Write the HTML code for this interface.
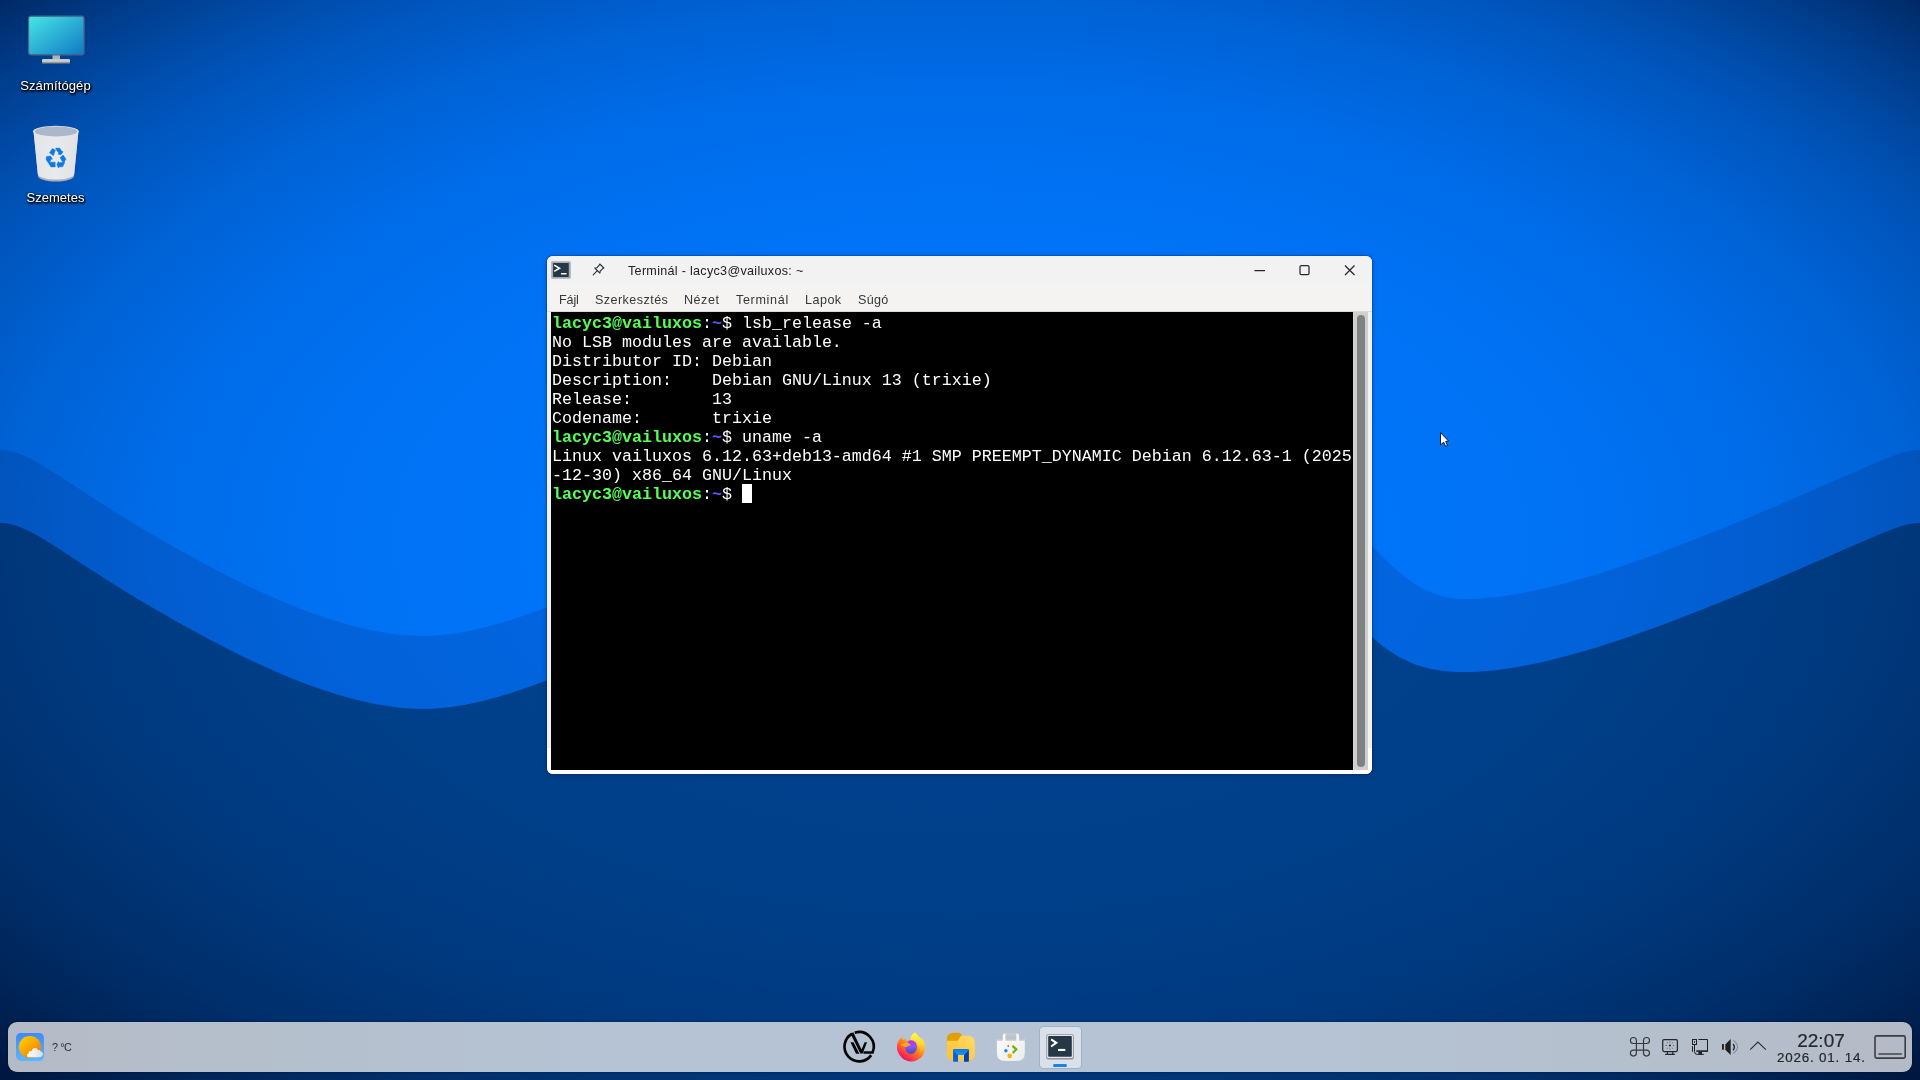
<!DOCTYPE html>
<html lang="hu">
<head>
<meta charset="utf-8">
<title>Desktop</title>
<style>
*{box-sizing:border-box;margin:0;padding:0}
html,body{width:1920px;height:1080px;overflow:hidden;background:#003a86;font-family:"Liberation Sans",sans-serif;}
#bg{position:absolute;left:0;top:0;width:1920px;height:1080px;display:block}
.abs{position:absolute}
.dlabel{position:absolute;color:#fff;font-size:13px;line-height:16px;text-align:center;white-space:nowrap;
 text-shadow:1px 1px 2px rgba(0,0,0,.95),0 1px 3px rgba(0,0,0,.85),0 0 2px rgba(0,0,0,.8),1px 2px 2px rgba(0,0,0,.6);}
/* window */
#win{position:absolute;left:547px;top:256px;width:825px;height:518px;background:#f2f2f2;border-radius:6px;
 box-shadow:0 0 0 1px rgba(0,30,90,.22),0 1px 5px rgba(0,20,70,.4);overflow:hidden}
#titlebar{position:absolute;left:0;top:0;width:825px;height:29px;background:#f2f2f2}
#menubar{position:absolute;left:0;top:29px;width:825px;height:27px;background:#f4f3f2;border-bottom:1px solid #dcdad8}
#title{position:absolute;left:81px;top:7px;font-size:12.6px;line-height:16px;color:#222;white-space:nowrap;letter-spacing:.29px}
.mi{position:absolute;top:36px;font-size:12.6px;line-height:16px;color:#33383c;white-space:nowrap}
#term{position:absolute;left:4px;top:56px;width:802px;height:458px;background:#000;color:#fff;
 font-family:"Liberation Mono",monospace;font-size:16.667px;line-height:19px;white-space:pre;padding:2px 0 0 1px}
#term b{color:#55ff55;font-weight:bold}
#term i{color:#5555ff;font-style:normal;font-weight:bold}
#cursor{display:inline-block;width:10px;height:19px;background:#fff;vertical-align:top;margin-top:-1px}
#sbtrack{position:absolute;left:806px;top:56px;width:15px;height:458px;background:#cfcfcf;border-left:1px solid #d9d6d2}
#sbthumb{position:absolute;left:810px;top:59px;width:8px;height:452px;background:#7e8283;border-radius:4px}
/* panel */
#panel{position:absolute;left:8px;top:1022px;width:1904px;height:50px;background:linear-gradient(90deg,#b4bac6 0%,#b5bfcb 10%,#b5c3d4 33%,#b5c3d4 67%,#b5bfcb 90%,#b4bac6 100%);border-radius:9px;box-shadow:0 0 3px rgba(0,0,20,.45)}
#temp{position:absolute;left:52px;top:1040px;font-size:10.8px;line-height:14px;color:#2a2e32;white-space:nowrap;letter-spacing:-.4px}
#clock{position:absolute;left:1771px;top:1029.6px;-webkit-text-stroke:.2px #24282c;width:100px;text-align:center;font-size:19px;line-height:22px;color:#24282c;white-space:nowrap;letter-spacing:0}
#date{position:absolute;left:1771px;top:1049.5px;-webkit-text-stroke:.2px #24282c;width:100px;text-align:center;font-size:13.4px;line-height:16px;color:#24282c;white-space:nowrap;letter-spacing:.8px;text-indent:.8px}
#active{position:absolute;left:1040px;top:1027px;width:40.5px;height:40.5px;background:#dbe1eb;border-radius:3.5px;box-shadow:0 0 0 .8px rgba(120,135,160,.4)}
#ind{position:absolute;left:1053px;top:1064px;width:14px;height:3px;background:#1683e6;border-radius:1.5px}
#title,.mi,#term,.dlabel,#temp,#clock,#date{will-change:transform}
</style>
</head>
<body>
<svg id="bg" width="1920" height="1080" viewBox="0 0 1920 1080">
 <defs>
  <radialGradient id="vg" gradientUnits="userSpaceOnUse" cx="0" cy="0" r="1" gradientTransform="translate(960 540) scale(1357.6 763.7)">
   <stop offset="0" stop-color="#000014" stop-opacity="0.0000"/>
   <stop offset="0.3" stop-color="#000014" stop-opacity="0.0053"/>
   <stop offset="0.4" stop-color="#000014" stop-opacity="0.0166"/>
   <stop offset="0.5" stop-color="#000014" stop-opacity="0.0406"/>
   <stop offset="0.6" stop-color="#000014" stop-opacity="0.0842"/>
   <stop offset="0.7" stop-color="#000014" stop-opacity="0.1561"/>
   <stop offset="0.8" stop-color="#000014" stop-opacity="0.2662"/>
   <stop offset="0.85" stop-color="#000014" stop-opacity="0.3393"/>
   <stop offset="0.9" stop-color="#000014" stop-opacity="0.4265"/>
   <stop offset="0.95" stop-color="#000014" stop-opacity="0.5294"/>
   <stop offset="1.0" stop-color="#000014" stop-opacity="0.6500"/>
  </radialGradient>
 </defs>
 <rect width="1920" height="1080" fill="#0075fa"/>
 <path id="w1" fill="#0265e0" d="M0,450 C30,450 60,480 148,532 C260,598 350,636 424,636 C520,636 640,560 800,500 C1000,430 1250,420 1372,546 C1400,575 1425,599 1464,599 C1560,599 1700,540 1864,468 C1890,457 1905,450 1920,450 L1920,1080 L0,1080 Z"/>
 <path id="w2" fill="#00418d" d="M0,523 C30,523 60,553 148,605 C260,671 350,709 424,709 C520,709 640,633 800,573 C1000,503 1250,493 1372,637 C1400,662 1425,672 1464,672 C1560,672 1700,613 1864,541 C1890,530 1905,523 1920,523 L1920,1080 L0,1080 Z"/>
 <rect width="1920" height="1080" fill="url(#vg)"/>
</svg>

<!-- desktop icons -->
<svg class="abs" style="left:26px;top:13px" width="60" height="54" viewBox="0 0 60 54">
 <defs><linearGradient id="mon" x1="0" y1="0" x2="1" y2="1"><stop offset="0" stop-color="#48e6e6"/><stop offset="1" stop-color="#0f78c4"/></linearGradient></defs>
 <rect x="26.5" y="41" width="7.5" height="6" fill="#aab3bd"/>
 <rect x="16" y="46" width="28" height="4" rx="1" fill="#c4cbd2"/>
 <rect x="16" y="49.5" width="28" height="1.5" fill="#5a6470"/>
 <rect x="2.5" y="3.2" width="55.5" height="38.6" rx="2.5" fill="url(#mon)" stroke="#4a6682" stroke-width="1.3"/>
</svg>
<div class="dlabel" style="left:5px;top:78px;width:101px;letter-spacing:.13px">Számítógép</div>

<svg class="abs" style="left:30px;top:123px" width="52" height="62" viewBox="0 0 52 62">
 <defs><linearGradient id="tr" x1="0" y1="0" x2="1" y2="0"><stop offset="0" stop-color="#e2e4e7"/><stop offset=".5" stop-color="#e9eaec"/><stop offset="1" stop-color="#e0e2e5"/></linearGradient></defs>
 <path d="M3.5,8 L8,53 C8,56.5 17,58.5 26,58.5 C35,58.5 44,56.5 44,53 L48.5,8 Z" fill="#a9aeb4"/>
 <path d="M3.5,8 L7.8,51 C7.8,54.5 17,56.5 26,56.5 C35,56.5 44.2,54.5 44.2,51 L48.5,8 Z" fill="url(#tr)"/>
 <ellipse cx="25.9" cy="8.3" rx="22.8" ry="5.5" fill="#e4e5e7"/>
 <ellipse cx="25.9" cy="8.5" rx="21.2" ry="4.9" fill="#abb8cb"/>
 <path fill="#0c7ade" stroke="#0c7ade" stroke-width=".5" stroke-linejoin="round" d="M22.4,25.6 L25.4,27.1 L23.4,32.8 L19.5,29.7 Z M25.6,25.1 L29.9,25.2 L31.5,28.1 L33.1,28.7 L31.0,31.7 L28.1,31.2 L28.9,30.0 L26.7,27.6 Z M33.1,32.1 L36.0,36.1 L34.1,38.9 L32.2,38.6 L30.1,34.6 Z M34.8,39.1 L32.7,43.8 L29.3,43.8 L28.4,45.0 L26.9,41.5 L28.4,38.4 L29.3,39.8 Z M19.5,39.2 L25.2,39.2 L25.2,43.9 L20.9,43.9 L19.1,41.0 Z M16.0,36.1 L16.6,33.4 L20.6,33.1 L22.4,36.1 L20.9,36.4 L19.1,40.7 L17.3,38.6 Z"/>
</svg>
<div class="dlabel" style="left:5px;top:190px;width:101px">Szemetes</div>

<!-- terminal window -->
<div id="win">
 <div id="titlebar"></div>
 <div id="menubar"></div>
 <svg class="abs" style="left:3px;top:4px" width="22" height="20" viewBox="0 0 22 20">
  <rect x="1.2" y="1.2" width="19.6" height="17.6" rx="1.2" fill="#a6aeb7"/>
  <rect x="3.1" y="3" width="15.7" height="13.9" rx=".4" fill="#263845"/>
  <path d="M4.2,5.1 L9.5,8.25 L4.2,11.4" fill="none" stroke="#fff" stroke-width="1.6"/>
  <rect x="11" y="13" width="5.6" height="1.5" fill="#fff"/>
 </svg>
 <svg class="abs" style="left:44px;top:6px" width="15" height="15" viewBox="-.6 -.6 15 15">
  <g fill="none" stroke="#2c3034" stroke-width="1.1" stroke-linejoin="round" stroke-linecap="round">
   <path d="M8.2,1.4 L12.2,5.4 L10.9,6.2 L8.6,8.6 L8.3,10.6 L3.2,5.4 L5.2,5.2 L7.5,2.8 Z"/>
   <path d="M5.7,8.1 L1.6,12.2"/>
  </g>
 </svg>
 <div id="title">Terminál - lacyc3@vailuxos: ~</div>
 <svg class="abs" style="left:700px;top:0" width="125" height="29" viewBox="0 0 125 29">
  <g fill="none" stroke="#25292d" stroke-width="1.25">
   <path d="M7.5,14.5 H18"/>
   <rect x="53" y="9.5" width="9" height="9" rx="1.3"/>
   <path d="M98,9.5 L107.5,19 M107.5,9.5 L98,19"/>
  </g>
 </svg>
 <div class="mi" style="left:12px;letter-spacing:-0.15px">Fájl</div>
 <div class="mi" style="left:48px;letter-spacing:0.43px">Szerkesztés</div>
 <div class="mi" style="left:137px;letter-spacing:0.5px">Nézet</div>
 <div class="mi" style="left:189px;letter-spacing:0.66px">Terminál</div>
 <div class="mi" style="left:258px;letter-spacing:0.46px">Lapok</div>
 <div class="mi" style="left:311px;letter-spacing:0.3px">Súgó</div>
 <div id="term"><b>lacyc3@vailuxos</b>:<i>~</i>$ lsb_release -a
No LSB modules are available.
Distributor ID: Debian
Description:    Debian GNU/Linux 13 (trixie)
Release:        13
Codename:       trixie
<b>lacyc3@vailuxos</b>:<i>~</i>$ uname -a
Linux vailuxos 6.12.63+deb13-amd64 #1 SMP PREEMPT_DYNAMIC Debian 6.12.63-1 (2025
-12-30) x86_64 GNU/Linux
<b>lacyc3@vailuxos</b>:<i>~</i>$ <span id="cursor"></span></div>
 <div class="abs" style="left:0;top:492px;width:825px;height:26px;background:#fff"></div>
 <div class="abs" style="left:4px;top:492px;width:802px;height:22px;background:#000"></div>
 <div id="sbtrack"></div>
 <div id="sbthumb"></div>
</div>

<!-- mouse cursor -->
<svg class="abs" style="left:1439px;top:431px" width="14" height="18" viewBox="0 0 14 18">
 <path d="M1.5,1.6 L1.5,13.8 L4.7,11.2 L6.6,15.3 L8.5,14.5 L6.7,10.5 L9.5,10 Z" fill="#fff" stroke="#10141c" stroke-width=".95" stroke-linejoin="round"/>
</svg>

<!-- panel -->
<div id="panel"></div>
<div id="temp">? °C</div>
<div id="active"></div>
<div id="ind"></div>
<div id="clock">22:07</div>
<div id="date">2026. 01. 14.</div>
<!-- weather -->
<svg class="abs" style="left:16px;top:1033px" width="28" height="28" viewBox="0 0 28 28">
 <defs>
  <linearGradient id="wbg" x1="0" y1="0" x2="0" y2="1"><stop offset="0" stop-color="#3f88ff"/><stop offset="1" stop-color="#5cb6ff"/></linearGradient>
  <linearGradient id="wsun" x1=".15" y1=".1" x2=".85" y2=".9"><stop offset="0" stop-color="#ffcc00"/><stop offset=".55" stop-color="#f8a000"/><stop offset="1" stop-color="#ee7400"/></linearGradient>
  <linearGradient id="wcl" x1="0" y1="0" x2="1" y2="0"><stop offset="0" stop-color="#ffffff"/><stop offset="1" stop-color="#dcdcdc"/></linearGradient>
 </defs>
 <rect x="0" y="0" width="28" height="28" rx="4.8" fill="url(#wbg)"/>
 <circle cx="13.9" cy="14" r="11.1" fill="url(#wsun)"/>
 <path d="M13,24.2 C10.6,24.2 10.3,21 12.6,20.4 C12.4,18.2 14.6,17.3 15.6,18.3 C15.9,14.3 21.4,13.8 22,17.4 C22.9,16.4 24.8,16.9 24.6,18.6 C27.4,18.8 27.6,22.4 25.6,23.6 C25,24.2 24,24.2 23,24.2 Z" fill="url(#wcl)"/>
</svg>
<!-- vailux logo -->
<svg class="abs" style="left:839px;top:1027px" width="40" height="40" viewBox="0 0 40 40">
 <g fill="none" stroke="#050505" stroke-width="2.7">
  <path d="M13.2,6.7 A14.7,14.7 0 1 0 32.2,28.1"/>
  <path d="M15.7,5.7 A14.7,14.7 0 0 1 33.6,25.5 L24.4,25.5" stroke-width="2.6"/>
</g>
 <path d="M12.6,8.8 L21.3,26.4 L23.6,26.4 L28.1,15.3 L25.6,15.3 L22.5,22.6 L14.3,5.3 L12.5,6.2 Z" fill="#050505"/>
 <path d="M11.5,15.3 L14.5,15.3 L20.4,26.8 L17,26.8 Z" fill="#050505"/>
</svg>
<!-- firefox -->
<svg class="abs" style="left:895px;top:1030.5px" width="32" height="32" viewBox="0 0 32 32">
 <defs>
  <linearGradient id="ffb" gradientUnits="userSpaceOnUse" x1="26" y1="4" x2="8" y2="30">
   <stop offset="0" stop-color="#fff44f"/><stop offset=".25" stop-color="#ffc830"/><stop offset=".5" stop-color="#ff8418"/><stop offset=".78" stop-color="#ff3a48"/><stop offset="1" stop-color="#e6006e"/>
  </linearGradient>
  <radialGradient id="ffg" cx=".45" cy=".4" r=".65"><stop offset="0" stop-color="#8a58ff"/><stop offset=".6" stop-color="#7a48e8"/><stop offset="1" stop-color="#5048b8"/></radialGradient>
  <linearGradient id="ffg2" x1="0" y1="0" x2="0" y2="1"><stop offset="0" stop-color="#c030ec"/><stop offset=".45" stop-color="#8a55ff"/><stop offset="1" stop-color="#4a4ab0"/></linearGradient>
  <linearGradient id="ffy" gradientUnits="userSpaceOnUse" x1="20" y1="2" x2="24" y2="24"><stop offset="0" stop-color="#fff44f"/><stop offset=".5" stop-color="#ffd838"/><stop offset="1" stop-color="#ff9a20" stop-opacity="0"/></linearGradient>
 </defs>
 <path d="M6.6,6.3 L8.3,9.3 L10.5,7.3 L12.2,10.5 L15.6,8.8 C15.6,6.5 16.2,4.6 17.4,3.4 C18.4,2.4 19.6,1.6 20.3,1.4 C20.4,2 20.8,2.4 21.3,2.9 C22.8,4.3 24.4,6 25.4,7.6 L27.1,7.4 C28.2,8.8 28.8,10.2 29.2,11.8 C29.9,13.3 30.1,15 30.05,16.5 C30,18.6 29.6,20.7 28.8,22.5 C28,24.3 26.9,25.9 25.4,27.1 C24,28.3 22.4,29.2 20.7,29.7 C19.2,30.2 17.6,30.5 16,30.5 C14.2,30.5 12.5,30.1 10.9,29.3 C8.8,28.4 7.1,27 5.8,25.4 C4.5,24 3.5,22.5 2.8,20.8 C2.1,19.1 1.8,17.4 1.9,15.6 C2,13.8 2.4,12.1 3.2,10.5 C4,8.9 5.2,7.5 6.6,6.3 Z" fill="url(#ffb)"/>
 <path d="M15.6,8.8 C15.6,6.5 16.2,4.6 17.4,3.4 C18.4,2.4 19.6,1.6 20.3,1.4 C20.4,2 20.8,2.4 21.3,2.9 C22.8,4.3 24.4,6 25.4,7.6 L27.1,7.4 C28.2,8.8 28.8,10.2 29.2,11.8 C29.9,14 30.1,16 29.6,19 C28,22 26,24 24,25 C25.5,21 25,17 22.5,13 C21,10.5 18.5,9 15.6,8.8 Z" fill="url(#ffy)"/>
 <ellipse cx="16" cy="16.1" rx="6" ry="6.8" fill="url(#ffg2)"/>
 <path d="M5.8,14 L8,12.7 C10,12.3 11,11.5 12.2,10.5 C13.4,12.2 14.8,13.2 16.1,14 C14.4,14.7 12.6,15.4 10.9,16 C9,15.5 7.4,15 5.8,14.4 Z" fill="#ffa81e"/>
</svg>
<!-- folder -->
<svg class="abs" style="left:945px;top:1031px" width="32" height="32" viewBox="0 0 32 32">
 <defs>
  <linearGradient id="fob" x1="0" y1="1" x2="1" y2="0"><stop offset="0" stop-color="#ffc02e"/><stop offset=".6" stop-color="#ffcf50"/><stop offset="1" stop-color="#ffdc6c"/></linearGradient>
  <linearGradient id="fot" x1="0" y1="0" x2="0" y2="1"><stop offset="0" stop-color="#0a78f6"/><stop offset="1" stop-color="#1a92ff"/></linearGradient>
 </defs>
 <path d="M1.9,12 L1.9,8.4 Q1.9,1.7 8.6,1.7 L13.6,1.7 Q15.3,1.7 16.1,3 L16.6,4.6 L12.8,11 Z" fill="#e0a000"/>
 <path d="M1.9,9.8 L12.6,9.8 L16.2,4.7 L22.6,4.7 Q29.8,4.7 29.8,11.9 L29.8,23 Q29.8,30 22.8,30 L8.9,30 Q1.9,30 1.9,23 Z" fill="url(#fob)"/>
 <path d="M8.7,17.9 L23.3,17.9 Q23.9,17.9 23.9,18.5 L19,24 L13,24 L8.1,18.5 Q8.1,17.9 8.7,17.9 Z" fill="url(#fot)"/>
 <path d="M8.1,18.5 L13,24 L13,30.7 L8.7,30.7 Q8.1,30.7 8.1,30.1 Z" fill="#0062de"/>
 <path d="M23.9,18.5 L19,24 L19,30.7 L23.3,30.7 Q23.9,30.7 23.9,30.1 Z" fill="#0040b0"/>
</svg>
<!-- store bag -->
<svg class="abs" style="left:995px;top:1031px" width="32" height="32" viewBox="0 0 32 32">
 <defs>
  <linearGradient id="bag" x1="0" y1="0" x2="1" y2="1"><stop offset="0" stop-color="#fbfbfb"/><stop offset="1" stop-color="#ececec"/></linearGradient>
 </defs>
 <rect x="9.6" y="2.1" width="12.6" height="2.8" rx="1" fill="#c8c8c8"/>
 <path d="M1.9,9 Q1.9,7.9 3,7.9 L28.7,7.9 Q29.8,7.9 29.8,9 L29.8,22 Q29.8,30 21.8,30 L9.9,30 Q1.9,30 1.9,22 Z" fill="url(#bag)"/>
 <path d="M1.9,9.8 L1.9,9 Q1.9,7.9 3,7.9 L28.7,7.9 Q29.8,7.9 29.8,9 L29.8,9.8 Z" fill="#c9c9c9"/>
 <path d="M7.8,10.4 L7.8,5 Q7.8,2.6 10.2,2.6 L10.4,2.6 L10.4,10.4 Z" fill="#fafafa"/>
 <path d="M24.1,10.4 L24.1,5 Q24.1,2.6 21.7,2.6 L21.3,2.6 L21.3,10.4 Z" fill="#f6f6f6"/>
 <rect x="12.5" y="14" width="1.5" height="1.9" rx=".3" fill="#f0603e"/>
 <circle cx="10.9" cy="19.8" r="1.75" fill="#0a92f2"/>
 <circle cx="14.7" cy="24.9" r="2.35" fill="#ffb400"/>
 <path d="M17.4,14.9 L21.4,18.4 L17.7,22.1" fill="none" stroke="#6ab400" stroke-width="2.1"/>
</svg>
<!-- terminal taskbar icon -->
<svg class="abs" style="left:1044px;top:1032px" width="32" height="30" viewBox="0 0 32 30">
 <rect x="2.3" y="2.2" width="27.5" height="25.2" rx="1.6" fill="#8b949c"/>
 <rect x="3.2" y="3.1" width="25.7" height="22.8" rx="1" fill="#e6e9ed"/>
 <rect x="4.2" y="4.1" width="23.6" height="20.7" rx=".8" fill="#263845"/>
 <path d="M7.1,7.4 L12.3,10.8 L7.1,14.5" fill="none" stroke="#fff" stroke-width="2"/>
 <rect x="14" y="16.9" width="7.3" height="2.1" fill="#fff"/>
</svg>
<!-- tray: command -->
<svg class="abs" style="left:1629px;top:1036px" width="22" height="22" viewBox="0 0 22 22">
 <path d="M7.4,17.05 L7.4,4.5 A3,3 0 1 0 4.4,7.5 L17.5,7.5 A3,3 0 1 0 14.5,4.5 L14.5,17.05 A3,3 0 1 0 17.5,14.05 L4.4,14.05 A3,3 0 1 0 7.4,17.05 Z" fill="none" stroke="#33383d" stroke-width="1.15"/>
</svg>
<!-- tray: monitor brightness -->
<svg class="abs" style="left:1660px;top:1037px" width="20" height="20" viewBox="0 0 20 20">
 <g fill="none" stroke="#24282c" stroke-width="1.25">
  <rect x="2.7" y="2.7" width="14.7" height="11.8" rx="1.4"/>
  <path d="M7.4,14.5 V17.4 M12.7,14.5 V17.4 M5.2,17.4 H14.9" stroke-width="1.1"/>
 </g>
 <circle cx="9.95" cy="8.5" r="1.05" fill="#24282c"/>
 <g stroke="#3a3f44" stroke-width=".9" opacity=".8">
  <path d="M9.95,4.4 V5.6 M9.95,11.4 V12.6 M5.6,8.5 H7 M12.9,8.5 H14.3 M7.1,5.3 L7.7,6.4 M12.8,5.3 L12.2,6.4 M7.1,11.7 L7.7,10.6 M12.8,11.7 L12.2,10.6"/>
 </g>
</svg>
<!-- tray: network -->
<svg class="abs" style="left:1690px;top:1037px" width="20" height="20" viewBox="0 0 20 20">
 <g fill="none" stroke="#1e2124" stroke-width="1">
  <rect x="2.5" y="2.5" width="4" height="5"/>
  <path d="M4.5,7.5 V14.6 Q4.5,17.4 7.3,17.4 H13.8"/>
  <path d="M2.5,9.2 V14.8"/>
  <path d="M8.4,2.5 H17.5 V14"/>
 </g>
 <rect x="4" y="4.2" width="1" height="1.7" fill="#1e2124"/>
 <rect x="6.3" y="13.3" width="11.7" height="1.6" fill="#1e2124"/>
 <rect x="8.4" y="14.8" width="3.6" height="2.6" fill="#1e2124"/>
</svg>
<!-- tray: volume -->
<svg class="abs" style="left:1720px;top:1037px" width="20" height="20" viewBox="0 0 20 20">
 <rect x="2" y="7.1" width="1.9" height="5.6" fill="#1e1e1e"/>
 <path d="M5.3,7.5 L10.7,1.9 L10.7,18.1 L5.3,12.7 Z" fill="#1e1e1e"/>
 <path d="M13.1,7 Q15.6,10 13.1,13.2" fill="none" stroke="#26292c" stroke-width="1.4"/>
 <path d="M13.2,3.1 Q21.9,10 13.2,16.5" fill="none" stroke="#868d97" stroke-width="1.1"/>
</svg>
<!-- tray: chevron -->
<svg class="abs" style="left:1748px;top:1038px" width="20" height="16" viewBox="0 0 20 16">
 <path d="M2.2,11.6 L9.9,4.1 L17.9,11.6" fill="none" stroke="#2a2e32" stroke-width="1.15"/>
</svg>
<!-- show desktop -->
<svg class="abs" style="left:1872px;top:1033px" width="36" height="28" viewBox="0 0 36 28">
 <rect x="3" y="2.9" width="30.2" height="22.2" rx="1.6" fill="none" stroke="#3a3e43" stroke-width="1.6"/>
 <path d="M6.4,21 H29.8" stroke="#3a3e43" stroke-width="1.4"/>
</svg>

</body>
</html>
